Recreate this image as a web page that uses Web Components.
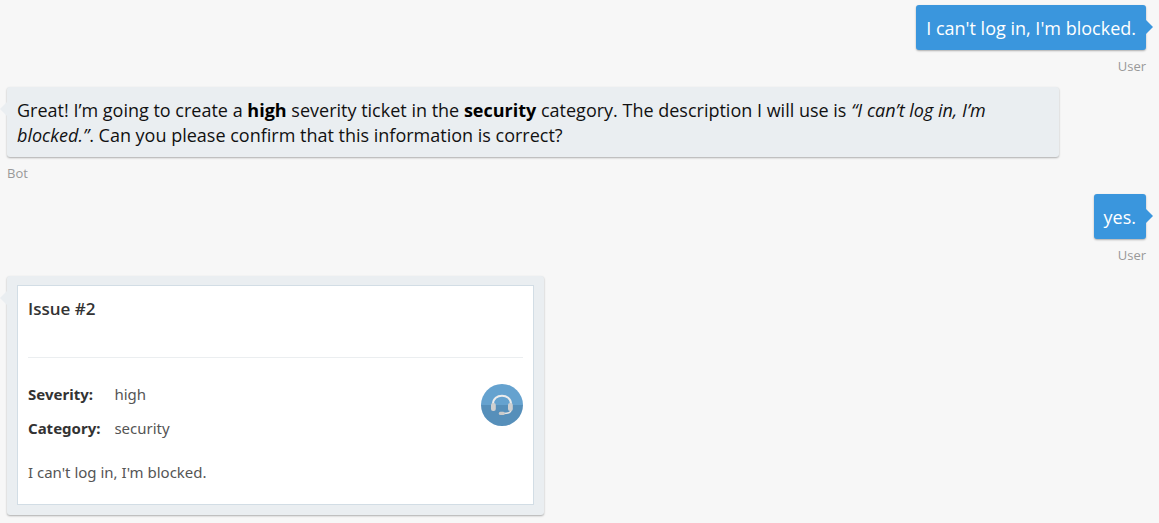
<!DOCTYPE html>
<html lang="en">
<head>
<meta charset="utf-8">
<meta name="viewport" content="width=device-width, initial-scale=1">
<title>Chat</title>
<style>
  body { margin: 0; background: #f7f7f7; font-family: "Open Sans", "Noto Sans", sans-serif; color: #000; }
</style>
</head>
<body>
<chat-log>
  <chat-message from="user" name="User">I can't log in, I'm blocked.</chat-message>
  <chat-message from="bot" name="Bot">Great! I’m going to create a <strong>high</strong> severity ticket in the <strong>security</strong> category. The description I will use is <em>“I can’t log in, I’m blocked.”</em>. Can you please confirm that this information is correct?</chat-message>
  <chat-message from="user" name="User">yes.</chat-message>
  <chat-message from="bot" card>
    <ticket-card>
      <span slot="title">Issue #2</span>
      <span slot="severity">high</span>
      <span slot="category">security</span>
      <span slot="description">I can't log in, I'm blocked.</span>
    </ticket-card>
  </chat-message>
</chat-log>

<template id="log">
  <style>
    :host { display: block; }
    main { display: flex; flex-direction: column; padding: 5px 13px 6px 7px; }
  </style>
  <main><slot></slot></main>
</template>

<template id="message">
  <style>
    :host { display: flex; flex-direction: column; align-items: flex-start; }
    :host([from="user"]) { align-items: flex-end; }
    .bubble {
      position: relative; box-sizing: border-box; max-width: 1052px; padding: 11px 10px 9px;
      border-radius: 3px; background: #eaeef1; box-shadow: 0 1px 2px rgba(0, 0, 0, .3);
      font-size: 18px; line-height: 25px; color: #111;
    }
    ::slotted(strong) { color: #000; }
    :host([from="user"]) .bubble { background: #3a96dd; color: #fff; }
    :host([card]) .bubble { width: 100%; max-width: 537px; padding: 9px 10px 10px; }
    .tail { position: absolute; top: 15px; left: -7px; width: 7px; height: 14px; fill: #eaeef1; }
    :host([from="user"]) .tail { left: auto; right: -7px; fill: #3a96dd; transform: scaleX(-1); }
    .name { padding: 6px 0 11px; font-size: 13px; line-height: 20px; color: #999; }
    .name:empty { display: none; }
  </style>
  <div class="bubble">
    <svg class="tail" viewBox="0 0 7 14" aria-hidden="true"><path d="M7 0v14L0 7z"/></svg>
    <slot></slot>
  </div>
  <div class="name"></div>
</template>

<template id="ticket">
  <style>
    :host { display: block; color: #555; font-family: "Noto Sans", "Open Sans", sans-serif; font-size: 15px; line-height: 20px; }
    article { padding: 11px 10px 22px; border: 1px solid #d2dde5; background: #fff; }
    h2 { margin: 0; padding-bottom: 36px; border-bottom: 1px solid #ebeef0; color: #333; font-family: "Open Sans", sans-serif; font-size: 17px; line-height: 24px; font-weight: 600; }
    .details { display: flex; justify-content: space-between; padding-top: 26px; }
    dl { display: grid; grid-template-columns: auto 1fr; gap: 14px; margin: 0; }
    dt { color: #333; font-weight: 700; }
    dd { margin: 0; }
    svg { width: 42px; height: 42px; }
    p { margin: 24px 0 0; }
  </style>
  <article>
    <h2><slot name="title"></slot></h2>
    <div class="details">
      <dl>
        <dt>Severity:</dt><dd><slot name="severity"></slot></dd>
        <dt>Category:</dt><dd><slot name="category"></slot></dd>
      </dl>
      <svg viewBox="0 0 42 42" role="img" aria-label="Support">
        <path d="M0 21a21 21 0 0 1 42 0z" fill="#65a2cf"/>
        <path d="M0 21a21 21 0 0 0 42 0z" fill="#568fba"/>
        <path d="M12 20C12 9 30 9 30 20" fill="none" stroke="#ececec" stroke-width="2"/>
        <path d="M30.500 25C30 29 27 29.500 22 29.500" fill="none" stroke="#e4e4e4" stroke-width="1.400"/>
        <rect x="10" y="19" width="4.800" height="8" rx="2" fill="#cfd0d1"/>
        <rect x="27" y="19" width="4.800" height="8" rx="2" fill="#cfd0d1"/>
        <rect x="17.800" y="27.800" width="6" height="3.200" rx="1.600" fill="#cacaca"/>
      </svg>
    </div>
    <p><slot name="description"></slot></p>
  </article>
</template>

<script>
  const render = (host, id) => {
    const root = host.attachShadow({ mode: "open" });
    root.append(document.getElementById(id).content.cloneNode(true));
    return root;
  };

  class ChatLog extends HTMLElement {
    constructor() { super(); render(this, "log"); }
  }

  class ChatMessage extends HTMLElement {
    constructor() { super(); render(this, "message"); }
    connectedCallback() {
      this.shadowRoot.querySelector(".name").textContent = this.getAttribute("name") || "";
    }
  }

  class TicketCard extends HTMLElement {
    constructor() { super(); render(this, "ticket"); }
  }

  customElements.define("chat-log", ChatLog);
  customElements.define("chat-message", ChatMessage);
  customElements.define("ticket-card", TicketCard);
</script>
</body>
</html>
